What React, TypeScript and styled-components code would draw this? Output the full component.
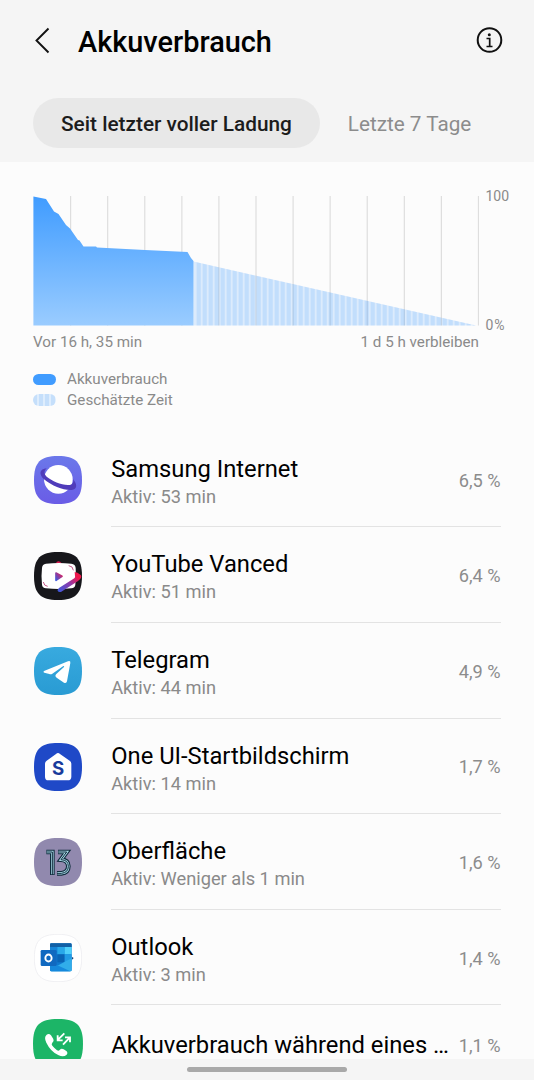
import React from 'react';
import styled, { createGlobalStyle } from 'styled-components';

const GlobalStyle = createGlobalStyle`
  * { box-sizing: border-box; }
  body { margin: 0; background: #fcfcfc; }
`;

const Screen = styled.div`
  display: flex;
  flex-direction: column;
  width: 534px;
  height: 1080px;
  overflow: hidden;
  background: #fcfcfc;
  color: #000;
  font-family: Roboto, 'Liberation Sans', sans-serif;
`;

const Header = styled.header`
  flex: none;
  height: 162px;
  background: #f5f5f5;
`;

const TitleBar = styled.div`
  display: flex;
  align-items: center;
  height: 82px;
  padding: 0 30px 0 33px;
`;

const BackIcon = styled.svg`
  width: 20px;
  height: 28px;
  margin-right: 25px;
`;

const Title = styled.h1`
  flex: 1;
  margin: 0;
  padding-top: 2px;
  font-size: 28.9px;
  font-weight: 500;
  line-height: 34px;
`;

const InfoIcon = styled.svg`
  width: 28px;
  height: 28px;
`;

const Tabs = styled.nav`
  display: flex;
  margin: 16px 0 0 33px;
`;

const Tab = styled.button<{ $active?: boolean }>`
  height: 50px;
  padding: 2px 28px 0;
  border: 0;
  border-radius: 25px;
  background: ${p => (p.$active ? '#e8e8e8' : 'transparent')};
  color: ${p => (p.$active ? '#1c1c1c' : '#8c8c8c')};
  font-family: inherit;
  font-size: ${p => (p.$active ? 20.8 : 20.7)}px;
  font-weight: ${p => (p.$active ? 500 : 400)};
  line-height: 48px;
  white-space: nowrap;
`;

const Main = styled.main`
  flex: 1;
  min-height: 0;
  overflow: hidden;
`;

const ChartSection = styled.section`
  height: 269.8px;
  padding: 34px 0 0 33px;
`;

const ChartRow = styled.div`
  display: flex;
`;

const ChartSvg = styled.svg`
  display: block;
  width: 446px;
  height: 130px;
`;

const Scale = styled.div`
  display: flex;
  flex-direction: column;
  justify-content: space-between;
  height: 146px;
  margin: -8px 0 -8px 6.5px;
  color: #8a8a8a;
  font-size: 14px;
  line-height: 17px;
`;

const Zero = styled.span`
  letter-spacing: 0.8px;
`;

const TimeLabels = styled.div`
  display: flex;
  justify-content: space-between;
  width: 446px;
  margin-top: 7px;
  color: #8a8a8a;
  font-size: 15.2px;
  line-height: 18px;
`;

const Legend = styled.div`
  display: flex;
  flex-direction: column;
  margin-top: 18px;
`;

const LegendItem = styled.div`
  display: flex;
  align-items: center;
  gap: 11px;
  height: 20.6px;
  color: #8a8a8a;
  font-size: 15.2px;
`;

const Swatch = styled.span<{ $striped?: boolean }>`
  width: 23px;
  height: 11.5px;
  border-radius: 6px;
  background: ${p =>
    p.$striped
      ? 'repeating-linear-gradient(90deg, #c5dffb 0 4px, #deedfd 4px 6px)'
      : '#409cff'};
`;

const List = styled.ul`
  margin: 0;
  padding: 0;
  list-style: none;
`;

const Row = styled.li<{ $single?: boolean }>`
  display: flex;
  height: ${p => (p.$single ? '80px' : '95.6px')};
  padding: 0 33.4px 0 ${p => (p.$single ? '33.4px' : '34.4px')};
`;

const IconSlot = styled.div<{ $size: number }>`
  flex: none;
  display: flex;
  align-items: center;
  width: ${p => (p.$size > 48 ? 77.8 : 76.8)}px;
  padding-top: ${p => (p.$size > 48 ? 0 : 1)}px;
  padding-bottom: ${p => (p.$size > 48 ? 3 : 0)}px;

  svg {
    display: block;
    width: ${p => p.$size}px;
    height: ${p => p.$size}px;
  }
`;

const RowBody = styled.div`
  flex: 1;
  min-width: 0;
  display: flex;
  align-items: center;
  gap: 4px;
  border-bottom: 1px solid #e3e3e3;
`;

const Texts = styled.div<{ $single?: boolean }>`
  flex: 1;
  min-width: 0;
  padding-top: ${p => (p.$single ? 1 : 4.4)}px;
`;

const Name = styled.div`
  font-size: 23.75px;
  line-height: 30px;
  white-space: nowrap;
`;

const Active = styled.div`
  color: #8a8a8a;
  font-size: 18.25px;
  line-height: 25px;
`;

const Percent = styled.div`
  padding-top: 3px;
  color: #8c8c8c;
  font-size: 18.2px;
  line-height: 24px;
  white-space: nowrap;
`;

const NavBar = styled.footer`
  flex: none;
  display: flex;
  justify-content: center;
  align-items: center;
  height: 21px;
  background: #f5f5f5;
`;

const Handle = styled.div`
  width: 160px;
  height: 5.5px;
  border-radius: 3px;
  background: #a9a9a9;
`;

const SQUIRCLE = 'M72 0C125 0 144 19 144 72S125 144 72 144 0 125 0 72 19 0 72 0Z';

const InternetIcon = () => (
  <svg viewBox="0 0 144 144">
    <defs>
      <linearGradient id="net" x1="0" y1="0" x2="0" y2="1">
        <stop offset="0" stopColor="#6b78ea" />
        <stop offset="1" stopColor="#6a5ce6" />
      </linearGradient>
    </defs>
    <path d={SQUIRCLE} fill="url(#net)" />
    <circle cx="73" cy="70" r="43" fill="#fff" />
    <path
      d="M38 37C16 38 14 56 30 70C54 90 90 104 113 102C131 100 130 84 117 69C120 80 115 88 102 87C80 86 54 75 38 62C29 53 30 45 38 37Z"
      fill="#503cba"
    />
  </svg>
);

const VancedIcon = () => (
  <svg viewBox="0 0 144 144">
    <defs>
      <linearGradient id="swoosh" gradientUnits="userSpaceOnUse" x1="70" y1="118" x2="140" y2="66">
        <stop offset="0" stopColor="#3b5be0" />
        <stop offset="0.5" stopColor="#8b3bab" />
        <stop offset="0.85" stopColor="#f0174b" />
      </linearGradient>
      <linearGradient id="play" x1="0" y1="1" x2="1" y2="0">
        <stop offset="0" stopColor="#3b5be0" />
        <stop offset="1" stopColor="#e81e55" />
      </linearGradient>
    </defs>
    <path d={SQUIRCLE} fill="#17171b" />
    <path d="M66 34C68 26 77 25 83 34Z" fill="#d81c50" />
    <path d="M36 35Q74 31 112 35Q124 36 125 48Q127 73 124 98Q123 108 112 109Q74 113 36 109Q25 108 24 98Q21 73 24 48Q25 36 36 35Z" fill="#fff" />
    <path
      d="M122 60Q130 60 140 69Q145 74 138 82L131 88L82 119Q74 122 71 116Q70 111 76 107L121 79Q124 76 123 73Z"
      fill="url(#swoosh)"
    />
    <path d="M66 63L84 73L66 85Z" fill="url(#play)" stroke="url(#play)" strokeWidth="5" strokeLinejoin="round" />
    <path d="M104 41Q117 42 118 55M28 90Q30 102 41 103" fill="none" stroke="#b93a72" strokeWidth="2.5" />
  </svg>
);

const TelegramIcon = () => (
  <svg viewBox="0 0 144 144">
    <defs>
      <linearGradient id="tg" x1="0" y1="0" x2="0" y2="1">
        <stop offset="0" stopColor="#38aadf" />
        <stop offset="1" stopColor="#299bd3" />
      </linearGradient>
    </defs>
    <path d={SQUIRCLE} fill="url(#tg)" />
    <path
      d="M30 72L102 43Q110 40 109 48L99 103Q97 111 90 107L68 92Q61 87 67 81L90 60Q92 56 87 58L55 80Q51 83 46 81L31 77Q26 75 30 72Z"
      fill="#fff"
    />
  </svg>
);

const HomeIcon = () => (
  <svg viewBox="0 0 144 144">
    <path d={SQUIRCLE} fill="#1f49c7" />
    <path d="M66 33Q72 27 78 33L107 53Q112 56 112 63V101Q112 112 101 112H43Q33 112 33 101V63Q33 56 38 53Z" fill="#fff" />
    <text x="72" y="95" textAnchor="middle" fontFamily="Inter, Roboto, sans-serif" fontWeight="700" fontSize="56" fill="#1a3c9c">
      S
    </text>
  </svg>
);

const ThirteenIcon = () => (
  <svg viewBox="0 0 144 144">
    <path d={SQUIRCLE} fill="#9189ae" />
    <g fill="none">
      <path d="M37 42H55V111M72 42H98L81 65Q103 66 103 85Q103 104 82 106H69" stroke="#102b3c" strokeWidth="14" />
      <path d="M38 42H55V109M73 42H98L81 65Q103 66 103 85Q103 104 82 106H70" stroke="#a9dce9" strokeWidth="7.5" />
      <path d="M37 42H55V111M72 42H98L81 65Q103 66 103 85Q103 104 82 106H69" stroke="#102b3c" strokeWidth="3" />
    </g>
  </svg>
);

const OutlookIcon = () => (
  <svg viewBox="0 0 144 144">
    <path d="M72 1C124 1 143 20 143 72S124 143 72 143 1 124 1 72 20 1 72 1Z" fill="#fff" stroke="#ededf0" strokeWidth="2.5" />
    <path d="M114 69L119 72L114 77Z" fill="#123b6d" />
    <rect x="48" y="28" width="65" height="84" rx="4" fill="#1079cf" />
    <path d="M48 39V32Q48 28 52 28H109Q113 28 113 32V39Z" fill="#1260a5" />
    <path d="M48 39H70V61H48Z" fill="#1685d7" />
    <path d="M70 39H92V61H70Z" fill="#28a8ea" />
    <path d="M92 39H113V61H92Z" fill="#50d0fa" />
    <path d="M70 61H92V85H70Z" fill="#0a64b6" />
    <path d="M92 61H113V82L92 88Z" fill="#219be5" />
    <path d="M113 73V108Q113 112 109 112H52L48 107L91 84Z" fill="#31adea" />
    <path d="M54 86L109 112H52Q48 112 48 108V83Z" fill="#1689dc" />
    <rect x="20" y="48" width="48" height="48" rx="4" fill="#1069c0" />
    <ellipse cx="43.5" cy="72" rx="9.5" ry="10.5" fill="none" stroke="#fff" strokeWidth="5.5" />
  </svg>
);

const CallIcon = () => (
  <svg viewBox="0 0 150 150">
    <path d="M75 0C131 0 150 19 150 75S131 150 75 150 0 131 0 75 19 0 75 0Z" fill="#1cb567" />
    <path
      d="M41 47Q48 42 54 49L61 60Q64 66 58 71Q54 75 58 80Q65 88 72 94Q77 97 80 93Q85 87 92 91L101 97Q106 102 101 107Q92 115 77 109Q53 98 40 71Q32 54 41 47Z"
      fill="#fff"
    />
    <path
      d="M94 43L75 62M74 49V64H89M90 77L110 56M96 55H111V70"
      fill="none"
      stroke="#fff"
      strokeWidth="5.5"
    />
  </svg>
);

const gridLines = Array.from({ length: 12 }, (_, i) => 37.6 + i * 37.08);
const stripes = Array.from({ length: 47 }, (_, i) => 162 + i * 6);

const Chart = () => (
  <ChartSvg viewBox="0 0 446 130">
    <defs>
      <linearGradient id="used" x1="0" y1="0" x2="0" y2="1">
        <stop offset="0" stopColor="#409cff" />
        <stop offset="1" stopColor="#9accff" />
      </linearGradient>
      <clipPath id="estimate">
        <path d="M160.5 65.5L443 129.5H160.5Z" />
      </clipPath>
    </defs>
    {gridLines.map(x => (
      <path key={x} d={`M${x} 0V129.5`} stroke="#dedede" strokeWidth="1.2" />
    ))}
    <g clipPath="url(#estimate)">
      <rect x="160" y="60" width="285" height="70" fill="#409cff" fillOpacity="0.17" />
      {stripes.map(x => (
        <rect key={x} x={x + 1.6} y="60" width="4.2" height="70" fill="#409cff" fillOpacity="0.16" />
      ))}
    </g>
    <path
      d="M0.4 0.5L13 3L21 15.5L25.5 18L33 29L37 32.5L45 44L46.5 44.5L50.5 50.5H63L64 51.5L112 54L154.5 56L158 62L160.5 65V129.5H0.4Z"
      fill="url(#used)"
    />
  </ChartSvg>
);

const apps = [
  { name: 'Samsung Internet', active: 'Aktiv: 53 min', percent: '6,5 %', Icon: InternetIcon },
  { name: 'YouTube Vanced', active: 'Aktiv: 51 min', percent: '6,4 %', Icon: VancedIcon },
  { name: 'Telegram', active: 'Aktiv: 44 min', percent: '4,9 %', Icon: TelegramIcon },
  { name: 'One UI-Startbildschirm', active: 'Aktiv: 14 min', percent: '1,7 %', Icon: HomeIcon },
  { name: 'Oberfläche', active: 'Aktiv: Weniger als 1 min', percent: '1,6 %', Icon: ThirteenIcon },
  { name: 'Outlook', active: 'Aktiv: 3 min', percent: '1,4 %', Icon: OutlookIcon },
  { name: 'Akkuverbrauch während eines …', active: '', percent: '1,1 %', Icon: CallIcon },
];

export default function App() {
  return (
    <Screen>
      <GlobalStyle />
      <Header>
        <TitleBar>
          <BackIcon viewBox="0 0 20 28" fill="none" stroke="#111" strokeWidth="1.9">
            <path d="M15.5 1.5L3.5 13.5L15.5 25.5" />
          </BackIcon>
          <Title>Akkuverbrauch</Title>
          <InfoIcon viewBox="0 0 28 28" fill="none" stroke="#111" strokeWidth="2">
            <circle cx="13.5" cy="13" r="11.8" />
            <path d="M10.5 11.5H13.7V19.5M10.5 19.5H16.5" strokeWidth="1.7" />
            <circle cx="13.3" cy="7.8" r="1.5" fill="#111" stroke="none" />
          </InfoIcon>
        </TitleBar>
        <Tabs>
          <Tab $active>Seit letzter voller Ladung</Tab>
          <Tab>Letzte 7 Tage</Tab>
        </Tabs>
      </Header>
      <Main>
        <ChartSection>
          <ChartRow>
            <Chart />
            <Scale>
              <span>100</span>
              <Zero>0%</Zero>
            </Scale>
          </ChartRow>
          <TimeLabels>
            <span>Vor 16 h, 35 min</span>
            <span>1 d 5 h verbleiben</span>
          </TimeLabels>
          <Legend>
            <LegendItem>
              <Swatch />
              Akkuverbrauch
            </LegendItem>
            <LegendItem>
              <Swatch $striped />
              Geschätzte Zeit
            </LegendItem>
          </Legend>
        </ChartSection>
        <List>
          {apps.map(({ name, active, percent, Icon }) => (
            <Row key={name} $single={!active}>
              <IconSlot $size={active ? 48 : 50}>
                <Icon />
              </IconSlot>
              <RowBody>
                <Texts $single={!active}>
                  <Name>{name}</Name>
                  {active && <Active>{active}</Active>}
                </Texts>
                <Percent>{percent}</Percent>
              </RowBody>
            </Row>
          ))}
        </List>
      </Main>
      <NavBar>
        <Handle />
      </NavBar>
    </Screen>
  );
}
